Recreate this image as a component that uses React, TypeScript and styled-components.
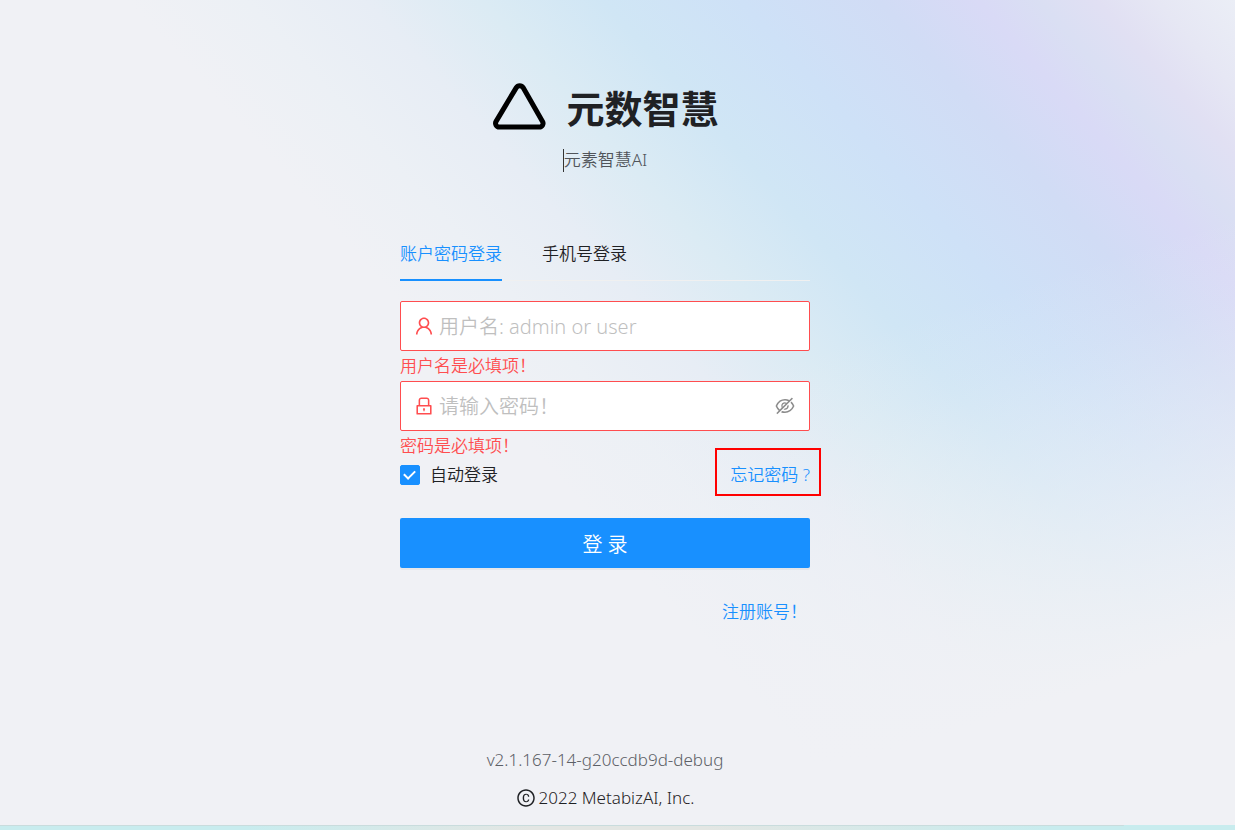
import React from 'react';
import styled, { createGlobalStyle } from 'styled-components';
import {
  AiOutlineCopyright,
  AiOutlineEyeInvisible,
  AiOutlineLock,
  AiOutlineUser,
} from 'react-icons/ai';

const GlobalStyle = createGlobalStyle`
  *, *::before, *::after { box-sizing: border-box; }
  body {
    margin: 0;
    font-family: "Noto Sans", "Noto Sans CJK SC", sans-serif;
    font-size: 17px;
    font-weight: 350;
    line-height: 28px;
    color: #1f2124;
  }
  input, button { font: inherit; }
`;

const Page = styled.div`
  display: flex;
  flex-direction: column;
  min-height: 100vh;
`;

const Screen = styled.div`
  flex: 1;
  display: flex;
  flex-direction: column;
  align-items: center;
  padding: 80px 25px 13px 0;
  background:
    linear-gradient(
      162deg,
      rgba(240, 241, 245, 0) 50%,
      rgba(240, 241, 245, 0.12) 57%,
      rgba(240, 241, 245, 0.42) 66%,
      rgba(240, 241, 245, 0.78) 77%,
      #f0f1f5 85%
    ),
    linear-gradient(
      48deg,
      #f0f1f5 44%,
      #ecf0f5 50%,
      #e7edf5 56%,
      #dbebf4 62%,
      #d0e6f5 68%,
      #cee1f7 75%,
      #d1dcf5 82%,
      #d9daf6 87%,
      #dadff3 90%,
      #e1e0f3 93%,
      #e6e7f4 96%,
      #ebeef6 100%
    );
`;

const Brand = styled.header`
  display: flex;
  flex-direction: column;
  align-items: center;
  gap: 10px;
`;

const BrandRow = styled.div`
  display: flex;
  align-items: center;
  gap: 20px;
`;

const Logo = styled.svg`
  width: 55px;
  height: 48px;
  display: block;
  overflow: visible;
`;

const Title = styled.h1`
  margin: 0;
  font-size: 38px;
  font-weight: 700;
  line-height: 56px;
`;

const Subtitle = styled.p`
  margin: 0;
  color: #50545a;
  display: flex;
  align-items: center;
`;

const Caret = styled.span`
  width: 1px;
  height: 23px;
  background: #333;
`;

const LoginForm = styled.form`
  width: 410px;
  max-width: 100%;
  margin-top: 50px;
`;

const Tabs = styled.div`
  display: flex;
  gap: 40px;
  margin-bottom: 20px;
  box-shadow: inset 0 -1px #f0f0f0;
`;

const Tab = styled.button<{ $active?: boolean }>`
  padding: 16px 0 11px;
  border: 0;
  border-bottom: 2px solid ${({ $active }) => ($active ? '#1890ff' : 'transparent')};
  background: none;
  color: ${({ $active }) => ($active ? '#1890ff' : 'inherit')};
  cursor: pointer;
`;

const Field = styled.label`
  display: flex;
  align-items: center;
  gap: 4px;
  height: 50px;
  padding: 0 13px 0 12px;
  background: #fff;
  border: 1px solid #ff4d4f;
  border-radius: 2px;
  color: #ff4d4f;

  svg {
    width: 22px;
    height: 22px;
    flex: none;
  }
`;

const TextInput = styled.input`
  flex: 1;
  min-width: 0;
  padding: 2px 0 0;
  border: 0;
  outline: 0;
  background: none;
  font-size: 20px;

  &::placeholder {
    color: #bfbfbf;
    opacity: 1;
  }
`;

const RevealButton = styled.button`
  display: flex;
  padding: 0;
  border: 0;
  background: none;
  color: #8c8c8c;
  cursor: pointer;
`;

const FieldError = styled.div`
  height: 30px;
  line-height: 30px;
  color: #ff4d4f;
`;

const Options = styled.div`
  display: flex;
  justify-content: space-between;
  align-items: center;
  margin-bottom: 29px;
`;

const CheckLabel = styled.label`
  display: flex;
  align-items: center;
  gap: 10px;
`;

const Checkbox = styled.input`
  appearance: none;
  display: grid;
  place-items: center;
  width: 20px;
  height: 20px;
  margin: 0;
  border: 1px solid #1890ff;
  border-radius: 2px;
  background: #fff;

  &:checked { background: #1890ff; }

  &:checked::after {
    content: "";
    width: 7px;
    height: 11px;
    margin: 0 1px 3px 0;
    border: solid #fff;
    border-width: 0 2px 2px 0;
    transform: rotate(45deg);
  }
`;

const Link = styled.a`
  color: #1890ff;
  text-decoration: none;
`;

const HighlightedLink = styled(Link)`
  position: relative;

  &::after {
    content: "";
    position: absolute;
    inset: -13px -11px -7px -15px;
    border: 2px solid #f00;
  }
`;

const Submit = styled.button`
  display: block;
  width: 100%;
  height: 50px;
  padding: 4px 0 0;
  border: 0;
  border-radius: 2px;
  background: #1890ff;
  box-shadow: 0 2px 0 rgba(0, 0, 0, 0.04);
  color: #fff;
  font-size: 20px;
  cursor: pointer;
`;

const RegisterRow = styled.div`
  display: flex;
  justify-content: flex-end;
  padding: 30px 3px 0;
`;

const Footer = styled.footer`
  display: flex;
  flex-direction: column;
  align-items: center;
  gap: 10px;
  margin-top: auto;
`;

const Version = styled.div`
  color: #5c6066;
`;

const Copyright = styled.div`
  display: flex;
  align-items: center;
  gap: 3px;

  svg {
    width: 20px;
    height: 20px;
  }
`;

const BottomEdge = styled.div`
  height: 5px;
  background:
    linear-gradient(#c9dcdd, #c9dcdd) 0 0 / 91% 1px no-repeat,
    linear-gradient(to right, #c8ecee 20%, #e3e6e3 43%, #e3e6e3 57%, #c8ecee 85%);
`;

export default function App() {
  return (
    <Page>
      <GlobalStyle />
      <Screen>
        <Brand>
          <BrandRow>
            <Logo viewBox="-1 1 55 48" aria-hidden="true">
              <path
                d="M24.3 4.6a4 4 0 0 1 6.8 0L50.5 38.4a3.7 3.7 0 0 1-3.2 5.6H7.3a3.7 3.7 0 0 1-3.2-5.6Z"
                fill="none"
                stroke="#000"
                strokeWidth="5"
                strokeLinejoin="round"
              />
            </Logo>
            <Title>元数智慧</Title>
          </BrandRow>
          <Subtitle>
            <Caret />
            元素智慧AI
          </Subtitle>
        </Brand>

        <LoginForm onSubmit={(e: React.FormEvent) => e.preventDefault()}>
          <Tabs role="tablist">
            <Tab type="button" role="tab" aria-selected="true" $active>
              账户密码登录
            </Tab>
            <Tab type="button" role="tab" aria-selected="false">
              手机号登录
            </Tab>
          </Tabs>

          <Field>
            <AiOutlineUser />
            <TextInput
              type="text"
              aria-label="用户名"
              aria-invalid="true"
              placeholder="用户名: admin or user"
            />
          </Field>
          <FieldError>用户名是必填项！</FieldError>

          <Field>
            <AiOutlineLock />
            <TextInput
              type="password"
              aria-label="密码"
              aria-invalid="true"
              placeholder="请输入密码！"
            />
            <RevealButton type="button" aria-label="显示密码">
              <AiOutlineEyeInvisible />
            </RevealButton>
          </Field>
          <FieldError>密码是必填项！</FieldError>

          <Options>
            <CheckLabel>
              <Checkbox type="checkbox" defaultChecked />
              自动登录
            </CheckLabel>
            <HighlightedLink href="#forgot">忘记密码 ?</HighlightedLink>
          </Options>

          <Submit type="submit">登 录</Submit>

          <RegisterRow>
            <Link href="#register">注册账号！</Link>
          </RegisterRow>
        </LoginForm>

        <Footer>
          <Version>v2.1.167-14-g20ccdb9d-debug</Version>
          <Copyright>
            <AiOutlineCopyright />
            2022 MetabizAI, Inc.
          </Copyright>
        </Footer>
      </Screen>
      <BottomEdge />
    </Page>
  );
}
